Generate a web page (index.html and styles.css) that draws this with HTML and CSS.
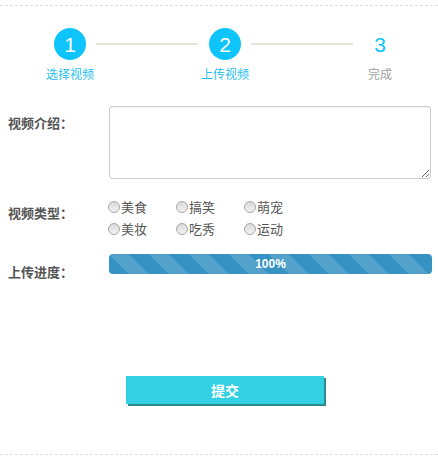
FILE: index.html
```html
<!DOCTYPE html>
<html lang="zh-CN">
<head>
<meta charset="utf-8">
<title>上传视频</title>
<link rel="stylesheet" href="styles.css">
</head>
<body>
<div class="panel">
  <div class="steps">
    <div class="step done">
      <div class="num">1</div>
      <div class="step-label">选择视频</div>
    </div>
    <div class="connector"></div>
    <div class="step done">
      <div class="num">2</div>
      <div class="step-label">上传视频</div>
    </div>
    <div class="connector second"></div>
    <div class="step todo">
      <div class="num">3</div>
      <div class="step-label">完成</div>
    </div>
  </div>

  <div class="row row-intro">
    <div class="label label-intro">视频介绍：</div>
    <textarea class="intro"></textarea>
  </div>

  <div class="row row-type">
    <div class="label label-type">视频类型：</div>
    <div class="options">
      <label class="opt"><input type="radio" name="t"><span>美食</span></label>
      <label class="opt"><input type="radio" name="t"><span>搞笑</span></label>
      <label class="opt"><input type="radio" name="t"><span>萌宠</span></label>
      <label class="opt"><input type="radio" name="t"><span>美妆</span></label>
      <label class="opt"><input type="radio" name="t"><span>吃秀</span></label>
      <label class="opt"><input type="radio" name="t"><span>运动</span></label>
    </div>
  </div>

  <div class="row row-progress">
    <div class="label label-progress">上传进度：</div>
    <div class="progress"><div class="bar" style="width:100%">100%</div></div>
  </div>

  <button class="submit" type="button">提交</button>
</div>
</body>
</html>
```

FILE: styles.css
```css
html, body {
  margin: 0;
  padding: 0;
  background: #fff;
}
body {
  font-family: "Liberation Sans", "Noto Sans CJK SC", sans-serif;
  color: #555;
}
.panel {
  margin-top: 5px;
  border-top: 1px dashed #dddddd;
  border-bottom: 1px dashed #dddddd;
}
.steps {
  display: flex;
  align-items: flex-start;
  padding: 22px 42px 0 54px;
}
.step {
  width: 32px;
  display: flex;
  flex-direction: column;
  align-items: center;
}
.num {
  width: 32px;
  height: 32px;
  border-radius: 50%;
  display: flex;
  align-items: center;
  justify-content: center;
  font-family: "Liberation Sans", sans-serif;
  font-size: 21px;
  line-height: 1;
}
.step.done .num {
  background: #0ec4fb;
  color: #fff;
}
.step.todo .num {
  color: #0ec4fb;
}
.step-label {
  margin-top: 6px;
  font-family: "Noto Sans CJK SC", sans-serif;
  font-size: 12px;
  line-height: 16px;
  white-space: nowrap;
}
.step.done .step-label {
  color: #26bfef;
}
.step.todo .step-label {
  color: #a0a0a0;
}
.connector {
  flex: 1;
  height: 2px;
  margin: 15px 11px 0 10px;
  background: #e4e2db;
}
.row {
  display: grid;
  grid-template-columns: 101px 1fr;
  align-items: start;
  padding: 0 6px 0 8px;
}
.label {
  font-family: "Noto Sans CJK SC", sans-serif;
  font-size: 13px;
  font-weight: bold;
  line-height: 18px;
  color: #555;
  white-space: nowrap;
}
.row-intro {
  margin-top: 24px;
}
.label-intro {
  margin-top: 8px;
}
.intro {
  display: block;
  box-sizing: border-box;
  width: 322px;
  height: 73px;
  margin: 0;
  border: 1px solid #cccccc;
  border-radius: 3px;
  box-shadow: inset 0 1px 1px rgba(0, 0, 0, 0.05);
  font-family: "Noto Sans CJK SC", sans-serif;
}
.row-type {
  margin-top: 17px;
}
.label-type {
  margin-top: 8px;
}
.options {
  display: grid;
  grid-template-columns: 68px 68px 68px;
  grid-auto-rows: 22px;
  margin-left: -1px;
}
.opt {
  display: flex;
  align-items: center;
  font-family: "Noto Sans CJK SC", sans-serif;
  font-size: 13px;
  color: #555;
  line-height: 22px;
}
.opt input {
  appearance: none;
  -webkit-appearance: none;
  box-sizing: border-box;
  width: 12px;
  height: 12px;
  margin: 0 1px 0 0;
  border: 1px solid #a8a8a8;
  border-radius: 50%;
  background: linear-gradient(#d9d9d9, #f3f3f3);
}
.row-progress {
  margin-top: 14px;
}
.label-progress {
  margin-top: 9px;
}
.progress {
  height: 20px;
  border-radius: 4px;
  overflow: hidden;
  background: #f5f5f5;
}
.bar {
  height: 20px;
  background-color: #3592c2;
  background-image: linear-gradient(45deg,
    rgba(255, 255, 255, 0.15) 25%, transparent 25%,
    transparent 50%, rgba(255, 255, 255, 0.15) 50%,
    rgba(255, 255, 255, 0.15) 75%, transparent 75%, transparent);
  background-size: 40px 40px;
  color: #fff;
  font-family: "Liberation Sans", sans-serif;
  font-size: 12px;
  font-weight: bold;
  line-height: 20px;
  text-align: center;
}
.submit {
  display: block;
  width: 198px;
  height: 28px;
  margin: 95px 0 50px 126px;
  padding: 0;
  border: none;
  background: #33d0e4;
  box-shadow: 2px 2px 0 #2f8990;
  color: #fff;
  font-family: "Noto Sans CJK SC", sans-serif;
  font-size: 14px;
  font-weight: bold;
  line-height: 28px;
}
```
